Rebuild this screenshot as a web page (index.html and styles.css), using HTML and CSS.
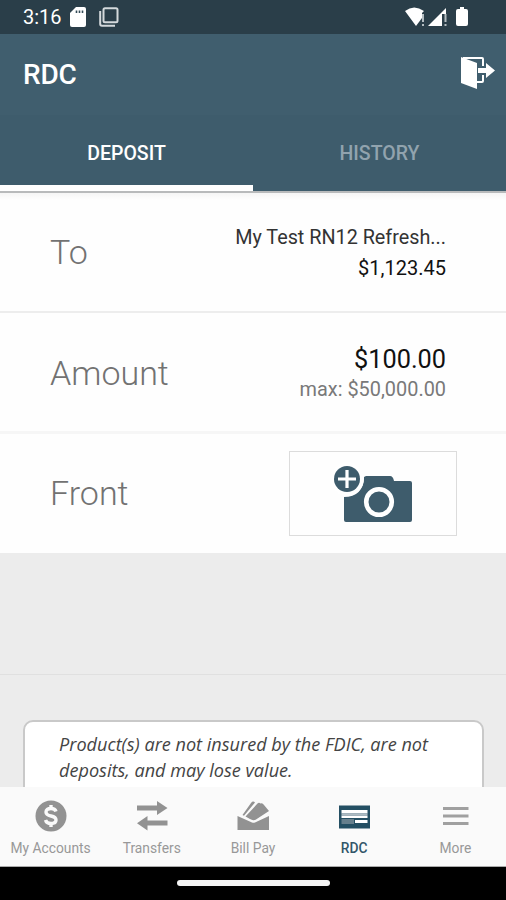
FILE: index.html
```html
<!DOCTYPE html>
<html lang="en">
<head>
<meta charset="utf-8">
<title>RDC</title>
<link rel="stylesheet" href="styles.css">
</head>
<body>
<div class="screen">
  <div class="status">
    <span class="time">3:16</span>
    <svg class="sd" width="16" height="20" viewBox="0 0 16 20"><path fill="#fff" d="M6 0H14Q16 0 16 2V18Q16 20 14 20H2Q0 20 0 18V6Z"/><path stroke="#344b57" stroke-width="1.6" d="M6.5 3.500V6M9.500 3.500V6M12.500 3.500V6"/></svg>
    <svg class="tabs-icon" width="20" height="20" viewBox="0 0 20 20" fill="none" stroke="#d4d9dc" stroke-width="2"><rect x="4.500" y="1.200" width="14" height="14" rx="1.500"/><path d="M1.200 4V17Q1.200 18.800 3 18.800H16"/></svg>
    <span class="grow"></span>
    <svg class="signals" width="66" height="22" viewBox="0 0 66 22"><path fill="#fff" d="M1 5Q10-2 20 5L18 7V12L12 20ZM24 20L42 2V8H38V20Z"/><path stroke="#b4bdc2" stroke-width="2" d="M19 8V16M19 18V20M41.500 8V16M41.500 18V20"/><path fill="#fff" d="M54 3H56V1H60V3H62Q64 3 64 5V18Q64 20 62 20H54Q52 20 52 18V5Q52 3 54 3Z"/></svg>
  </div>
  <header class="appbar">
    <h1>RDC</h1>
    <svg width="36" height="34" viewBox="0 0 36 34"><path fill="none" stroke="#fff" stroke-width="2" d="M3 2H22Q23 2 23 3V10M23 19V25Q23 26 22 26H17"/><path fill="#fff" d="M1 1L17 7V33L1 27ZM18 12H26V7L35 14.500L26 22V17H18Z"/></svg>
  </header>
  <nav class="tabs"><div class="tab active">DEPOSIT</div><div class="tab">HISTORY</div></nav>
  <main class="content">
    <section class="row first">
      <div class="label">To</div>
      <div class="values"><div class="account">My Test RN12 Refresh...</div><div class="balance">$1,123.45</div></div>
    </section>
    <section class="row second">
      <div class="label">Amount</div>
      <div class="values"><div class="amount">$100.00</div><div class="max">max: $50,000.00</div></div>
    </section>
    <section class="row third">
      <div class="label">Front</div>
      <div class="photo">
        <svg width="80" height="60" viewBox="0 0 80 60"><path fill="#3e5c6c" d="M10 31Q29 31 30 11L32 10H56Q59 10 60 15H76Q78 15 78 17V54Q78 56 76 56H12Q10 56 10 54Z"/><circle cx="13" cy="13" r="17" fill="#fff"/><circle cx="13" cy="13" r="13" fill="#3e5c6c"/><path stroke="#fff" stroke-width="3.200" d="M4 13H22M13 4V22"/><circle cx="45" cy="36" r="12.800" fill="none" stroke="#fff" stroke-width="4.600"/></svg>
      </div>
    </section>
    <div class="blank"></div>
    <div class="notice-area"><div class="notice">Product(s) are not insured by the FDIC, are not<br>deposits, and may lose value.</div></div>
  </main>
  <nav class="bottom">
    <div class="item"><svg width="34" height="34" viewBox="0 0 34 34"><circle cx="17" cy="17" r="15.500" fill="#929292"/><path fill="none" stroke="#fafafa" stroke-width="3.400" d="M22 12.500Q21 9.500 17 9.500Q12 9.500 12 13Q12 16 17 17Q22 18 22 21Q22 24.500 17 24.500Q12.500 24.500 11.500 21M17 6V10M17 24V28"/></svg><span>My Accounts</span></div>
    <div class="item"><svg width="34" height="34" viewBox="0 0 34 34" fill="#929292"><path d="M2 6.500H22V2L32.500 9L22 16V11.500H2ZM32.500 21.500H12.500V17L2 24.300L12.500 31.500V26.500H32.500Z"/></svg><span>Transfers</span></div>
    <div class="item"><svg width="34" height="34" viewBox="0 0 34 34" fill="#929292"><path d="M1.500 17L16 23.500Q17.500 24 19 23.500L33 17V31H1.500ZM6.500 16L15 4Q17 1.500 19 3.500L8 16.800ZM9.500 17.500L21.500 4.500Q23 3 24.500 4.500Q26.500 3.500 28 6L33 12L20 20.500Q17 22 14 20Z"/></svg><span>Bill Pay</span></div>
    <div class="item current"><svg width="34" height="34" viewBox="0 0 34 34"><path fill="#244f63" d="M2 6.500H33V29.500H2Z"/><path fill="#fff" d="M4.500 11H30.500V14.500H4.500ZM4.500 16.500H30.500V19H4.500ZM18 21H30.500V24H18Z"/><path fill="#aebbc3" d="M4.500 14.500H30.500V16.500H4.500Z"/><path fill="#667f8c" d="M4.500 20H17V25H4.500Z"/></svg><span>RDC</span></div>
    <div class="item"><svg width="34" height="34" viewBox="0 0 34 34"><path stroke="#a0a0a0" stroke-width="3" d="M5 9.500H30.500M5 17H30.500M5 24.500H30.500"/></svg><span>More</span></div>
  </nav>
  <div class="system"><div class="handle"></div></div>
</div>
</body>
</html>
```
FILE: styles.css
```css
* { box-sizing: border-box; }
body { margin: 0; font-family: Roboto, "Liberation Sans", sans-serif; }
svg { display: block; flex: none; overflow: visible; }
.screen { width: 506px; height: 900px; display: flex; flex-direction: column; overflow: hidden; background: #ececec; }
.status { height: 34px; flex: none; background: #2a3e49; display: flex; align-items: center; padding: 0 36px 0 23px; color: #fff; }
.time { font-size: 20px; width: 47px; line-height: 34px; }
.sd { margin-right: 13px; }
.grow { flex: 1; }
.appbar { height: 81px; flex: none; background: #405e6e; display: flex; justify-content: space-between; padding: 0 10px 0 23px; color: #fff; }
.appbar h1 { margin: 0; font-size: 28px; font-weight: 500; line-height: 82px; letter-spacing: -0.2px; }
.appbar svg { margin-top: 22px; }
.tabs { height: 78px; flex: none; background: #3e5c6c; display: flex; border-bottom: 2px solid #b8babb; }
.tab { flex: 1; text-align: center; font-size: 19.500px; font-weight: 500; line-height: 78px; color: #91a3ae; border-bottom: 6px solid transparent; }
.tab.active { color: #fff; border-bottom-color: #fff; }
.content { flex: 1; min-height: 0; overflow: hidden; }
.row { display: flex; justify-content: space-between; align-items: center; padding: 0 60px 0 50px; background: #fefefe; }
.first { height: 120px; padding-top: 1px; border-bottom: 2px solid #ededed; background: linear-gradient(#f5f5f5, #fefefe 7px); }
.second { height: 121px; padding-top: 3px; border-bottom: 3px solid #f6f6f6; }
.third { height: 119px; padding-right: 49px; }
.label { font-size: 34px; font-weight: 300; line-height: 42px; padding-bottom: 1px; color: #727272; }
.values { text-align: right; color: #111; }
.account { font-size: 19.800px; line-height: 31px; color: #333; }
.balance { font-size: 20px; line-height: 31px; }
.amount { font-size: 25.300px; line-height: 31px; padding-top: 2px; }
.max { font-size: 19.900px; line-height: 30px; color: #797979; }
.photo { width: 168px; height: 85px; border: 1px solid #dcdcdc; display: flex; justify-content: center; align-items: center; padding: 4px 0 0 2px; }
.blank { height: 122px; border-bottom: 1px solid #e0e0e0; }
.notice-area { padding: 45px 22px 0 23px; }
.notice { height: 90px; border: 2px solid #c9c9c9; border-radius: 10px; background: #fff; padding: 9px 0 0 34px; font: italic 18.100px/26px "Open Sans", "Noto Sans", sans-serif; color: #444; white-space: nowrap; }
.bottom { height: 80px; flex: none; display: flex; background: #fafafa; border-bottom: 1px solid #aaa; }
.item { flex: 1; display: flex; flex-direction: column; align-items: center; padding-top: 12px; font-size: 13.800px; line-height: 18px; color: #989898; white-space: nowrap; }
.item span { margin-top: 6px; }
.item.current { color: #315669; font-weight: 500; }
.system { height: 33px; flex: none; background: #000; display: flex; justify-content: center; padding-top: 13px; }
.handle { width: 153px; height: 6px; border-radius: 3px; background: #f4f4f4; }
```
